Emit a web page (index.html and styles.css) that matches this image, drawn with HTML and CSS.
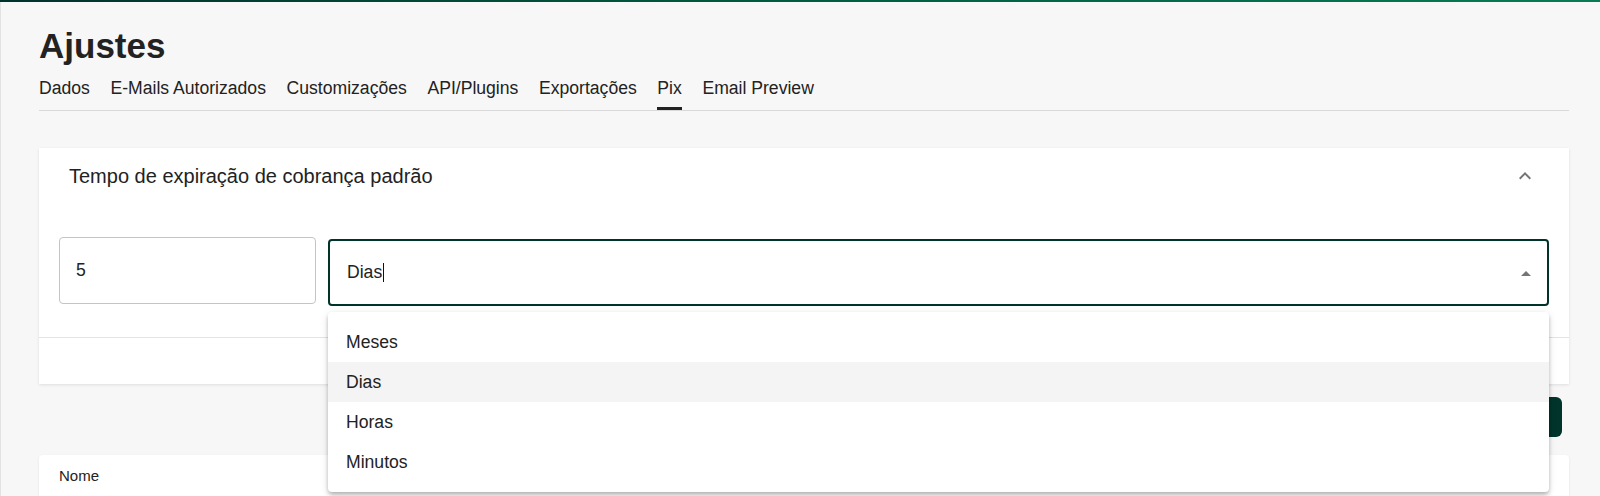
FILE: index.html
```html
<!DOCTYPE html>
<html lang="pt-BR">
<head>
<meta charset="utf-8">
<title>Ajustes</title>
<link rel="stylesheet" href="styles.css">
</head>
<body>
<div class="topbar"></div>
<main class="page">
  <h1 class="title">Ajustes</h1>
  <nav class="tabs">
    <a class="tab">Dados</a>
    <a class="tab">E-Mails Autorizados</a>
    <a class="tab">Customizações</a>
    <a class="tab">API/Plugins</a>
    <a class="tab">Exportações</a>
    <a class="tab active">Pix</a>
    <a class="tab">Email Preview</a>
  </nav>

  <section class="card">
    <header class="card-head">
      <span class="card-title">Tempo de expiração de cobrança padrão</span>
      <svg class="chev" width="24" height="24" viewBox="0 0 24 24"><path d="M12 8l-6 6 1.41 1.41L12 10.83l4.59 4.58L18 14z"/></svg>
    </header>
    <div class="card-body">
      <div class="field">5</div>
      <div class="select-wrap">
        <div class="select">
          <span class="value">Dias<span class="caret"></span></span>
          <svg class="arrow" width="24" height="24" viewBox="0 0 24 24"><path d="M7 14l5-5 5 5z"/></svg>
        </div>
        <ul class="menu">
          <li class="item">Meses</li>
          <li class="item selected">Dias</li>
          <li class="item">Horas</li>
          <li class="item">Minutos</li>
        </ul>
      </div>
    </div>
    <div class="card-foot"></div>
  </section>

  <div class="actions">
    <button class="btn">Salvar</button>
  </div>

  <section class="table-card">
    <div class="th">Nome</div>
  </section>
</main>
</body>
</html>
```
FILE: styles.css
```css
* { box-sizing: border-box; }
html, body { margin: 0; padding: 0; }
body {
  background: #f7f7f7;
  font-family: "Liberation Sans", Arial, sans-serif;
  color: #222;
  height: 496px;
  overflow: hidden;
}
.topbar {
  height: 2px;
  background: linear-gradient(90deg, #00332a 0%, #005c41 50%, #087b56 100%);
}
.page {
  border-left: 1px solid #e3e3e3;
  padding: 24px 31px 0 38px;
  min-height: 494px;
}
.title {
  margin: 0;
  font-size: 35px;
  line-height: 40px;
  font-weight: 700;
  color: #222;
}
.tabs {
  margin-top: 12px;
  display: flex;
  gap: 20.6px;
  border-bottom: 1px solid #d9d9d9;
}
.tab {
  font-size: 17.6px;
  line-height: 20px;
  padding-bottom: 9px;
  border-bottom: 3px solid transparent;
  color: #222;
}
.tab.active { border-bottom-color: #222; }

.card {
  margin-top: 37px;
  background: #fff;
  box-shadow: 0 1px 3px rgba(0,0,0,0.10);
}
.card-head {
  height: 56px;
  display: flex;
  align-items: center;
  justify-content: space-between;
  padding: 0 32px 0 30px;
}
.card-title { font-size: 20px; color: #222; }
.chev { fill: #757575; }
.card-body {
  display: flex;
  align-items: flex-start;
  gap: 12px;
  padding: 33px 20px 31px 20px;
}
.field {
  width: 257px;
  height: 67px;
  border: 1px solid #c4c4c4;
  border-radius: 4px;
  padding: 0 16px;
  display: flex;
  align-items: center;
  font-size: 17.6px;
  color: #222;
}
.select-wrap {
  flex: 1;
  position: relative;
  margin-top: 2px;
}
.select {
  height: 67px;
  border: 2px solid #00332a;
  border-radius: 4px;
  padding: 0 9px 0 17px;
  display: flex;
  align-items: center;
  justify-content: space-between;
  font-size: 17.6px;
}
.value { display: flex; align-items: center; }
.caret {
  display: inline-block;
  width: 1px;
  height: 19px;
  background: #111;
  margin-left: 1px;
}
.arrow { fill: #757575; margin-top: 2px; }
.menu {
  position: absolute;
  left: 0;
  right: 0;
  top: calc(100% + 6px);
  margin: 0;
  padding: 10px 0;
  list-style: none;
  background: #fff;
  border-radius: 4px;
  box-shadow: 0 2px 4px -1px rgba(0,0,0,0.2), 0 4px 5px 0 rgba(0,0,0,0.14), 0 1px 10px 0 rgba(0,0,0,0.08);
  z-index: 10;
}
.item {
  height: 40px;
  display: flex;
  align-items: center;
  padding-left: 18px;
  padding-top: 1px;
  font-size: 17.6px;
  color: #222;
}
.item.selected { background: #f4f4f4; }
.card-foot {
  border-top: 1px solid #e3e3e3;
  height: 47px;
}
.actions {
  margin-top: 13px;
  display: flex;
  justify-content: flex-end;
  padding-right: 7px;
}
.btn {
  height: 40px;
  width: 110px;
  border: none;
  border-radius: 6px;
  background: #01352b;
  color: #fff;
  font-family: inherit;
  font-size: 16px;
}
.table-card {
  margin-top: 18px;
  background: #fff;
  border-radius: 4px 4px 0 0;
  box-shadow: 0 1px 3px rgba(0,0,0,0.08);
  height: 60px;
}
.th {
  padding: 11px 20px;
  font-size: 15px;
  line-height: 20px;
  color: #222;
}
```
